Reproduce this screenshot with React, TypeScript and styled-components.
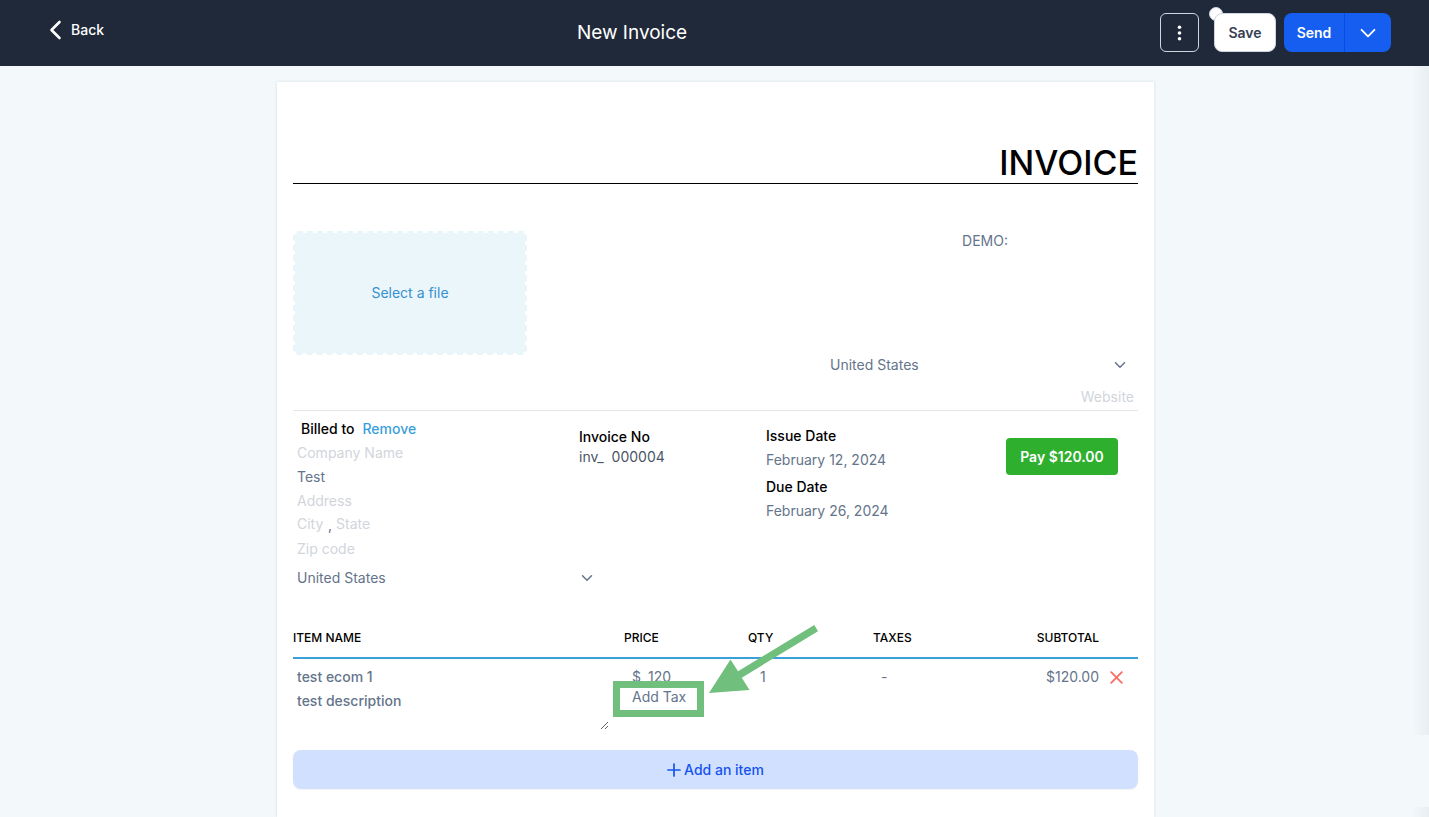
import React from "react";
import styled, { createGlobalStyle, css } from "styled-components";

const GlobalStyle = createGlobalStyle`
  *, *::before, *::after { box-sizing: border-box; }
  body {
    margin: 0;
    background: #f3f8fb;
    color: #64748b;
    font-family: Inter, "Liberation Sans", sans-serif;
    font-size: 14px;
    line-height: 20px;
  }
  button, input, select, textarea { font: inherit; color: inherit; }
  button { cursor: pointer; }
`;

const Page = styled.div`
  min-height: 100vh;
  display: flex;
  flex-direction: column;
`;

const Header = styled.header`
  display: flex;
  justify-content: space-between;
  align-items: center;
  height: 66px;
  padding: 0 38px 1px 49px;
  background: #202939;
  color: #fff;
`;

const BackLink = styled.a`
  display: flex;
  align-items: center;
  gap: 9px;
  padding-bottom: 5px;
  color: #fff;
  font-weight: 500;
  text-decoration: none;
`;

const PageTitle = styled.h1`
  margin: 0;
  font-size: 19px;
  line-height: 28px;
  font-weight: 400;
`;

const Actions = styled.div`
  display: flex;
  align-items: center;
`;

const actionButton = css`
  display: flex;
  align-items: center;
  justify-content: center;
  height: 39px;
  padding: 0;
  font-weight: 600;
`;

const MenuButton = styled.button`
  ${actionButton}
  width: 39px;
  margin-right: 15px;
  border: 1px solid #cdd5df;
  border-radius: 6px;
  background: transparent;
  color: #fff;
`;

const SaveWrap = styled.div`
  position: relative;
  margin-right: 8px;
`;

const StatusDot = styled.span`
  position: absolute;
  left: -5px;
  top: -6px;
  width: 14px;
  height: 14px;
  border: 1px solid #cdd5df;
  border-radius: 50%;
  background: #fff;
`;

const SaveButton = styled.button`
  ${actionButton}
  position: relative;
  width: 62px;
  border: 1px solid #cdd5df;
  border-radius: 8px;
  background: #fff;
  color: #364152;
`;

const SplitButton = styled.div`
  display: flex;
  border-radius: 8px;
  overflow: hidden;
  background: #155eef;
`;

const SplitPart = styled.button<{ $width: number; $divided?: boolean }>`
  ${actionButton}
  width: ${(p) => p.$width}px;
  border: 0;
  border-left: ${(p) => (p.$divided ? "1px solid #004eeb" : "0")};
  background: transparent;
  color: #fff;
`;

const Main = styled.main`
  flex: 1;
  display: flex;
  justify-content: center;
  padding: 16px 16px 0 18px;
`;

const Sheet = styled.form`
  flex: 0 1 877px;
  min-width: 0;
  padding: 61px 16px 28px;
  background: #fff;
  box-shadow: 0 0 3px rgba(16, 24, 40, 0.12);
`;

const SheetTitle = styled.h2`
  margin: 0 0 47px;
  border-bottom: 1px solid #000;
  color: #000;
  font-size: 34px;
  line-height: 40px;
  font-weight: 500;
  text-align: right;
`;

const Business = styled.section`
  display: flex;
  justify-content: space-between;
  min-height: 180px;
  border-bottom: 1px solid #e5e7eb;
`;

const UploadButton = styled.button`
  width: 234px;
  height: 124px;
  border: 2px dashed #e8f6fa;
  border-radius: 4px;
  background: #ebf6fb;
  background-clip: padding-box;
  color: #3690cf;
`;

const BusinessFields = styled.div`
  display: flex;
  flex-direction: column;
  width: 312px;
`;

const Field = styled.input<{ $strong?: boolean; $align?: string; $width?: string }>`
  display: block;
  width: ${(p) => p.$width || "100%"};
  height: 24px;
  padding: 0 4px 2px;
  border: 0;
  background: transparent;
  font-weight: ${(p) => (p.$strong ? 500 : 400)};
  text-align: ${(p) => p.$align || "left"};
  outline: none;
  &::placeholder { color: #d1d5db; opacity: 1; }
`;

const CompactField = styled(Field)`
  height: 20px;
  padding: 0 4px;
`;

const NameField = styled(CompactField)`
  margin-bottom: auto;
  padding-left: 10px;
`;

const SelectWrap = styled.div`
  display: grid;
  align-items: center;
  width: 312px;
  height: 34px;
  svg {
    grid-area: 1 / 1;
    justify-self: end;
    margin-right: 11px;
    pointer-events: none;
  }
`;

const Select = styled.select`
  grid-area: 1 / 1;
  width: 100%;
  height: 100%;
  padding: 0 4px;
  border: 0;
  background: transparent;
  appearance: none;
  outline: none;
`;

const WebsiteField = styled(Field)`
  margin: 3px 0 1px;
`;

const Details = styled.section`
  display: grid;
  grid-template-columns: 286fr 187fr 240fr 132fr;
  padding-top: 6px;
`;

const BilledHead = styled.div`
  display: flex;
  gap: 8px;
  padding-left: 8px;
  line-height: 24px;
`;

const Label = styled.span`
  color: #000;
  font-weight: 500;
`;

const RemoveButton = styled.button`
  padding: 0;
  border: 0;
  background: none;
  color: #3a9fdb;
  font-weight: 500;
`;

const CityRow = styled.div`
  display: flex;
  line-height: 24px;
`;

const InvoiceNo = styled.div`
  display: flex;
  flex-direction: column;
  padding-top: 10px;
`;

const NumberRow = styled.div`
  display: flex;
  gap: 4px;
  color: #4b5565;
`;

const Dates = styled.dl`
  margin: 0;
  padding-top: 7px;
  line-height: 24px;
  dt { color: #000; font-weight: 500; }
  dd { margin: 0 0 3px; }
`;

const PayButton = styled.button`
  width: 112px;
  height: 37px;
  margin-top: 21px;
  padding: 0;
  border: 0;
  border-radius: 4px;
  background: #2eaf2e;
  color: #fff;
  font-weight: 600;
`;

const ItemsTable = styled.table`
  width: 100%;
  margin-top: 23px;
  border-collapse: collapse;
  table-layout: fixed;
`;

const HeadCell = styled.th<{ $width?: string; $right?: boolean }>`
  width: ${(p) => p.$width || "auto"};
  height: 40px;
  padding: 1px 0 0;
  border-bottom: 2px solid #3a9fdb;
  color: #000;
  font-size: 12px;
  line-height: 16px;
  font-weight: 500;
  text-align: ${(p) => (p.$right ? "right" : "left")};
`;

const Cell = styled.td<{ $indent?: number; $right?: boolean }>`
  position: relative;
  padding: 8px 0 0 ${(p) => p.$indent || 0}px;
  vertical-align: top;
  text-align: ${(p) => (p.$right ? "right" : "left")};
`;

const Description = styled.textarea`
  display: block;
  width: calc(100% - 15px);
  height: 41px;
  padding: 2px 4px;
  border: 0;
  background: transparent;
  font-weight: 500;
  resize: both;
  outline: none;
`;

const ItemName = styled(CompactField)`
  margin-bottom: 2px;
`;

const PriceRow = styled.div`
  display: flex;
  gap: 3px;
`;

const TextButton = styled.button`
  display: block;
  padding: 0;
  border: 0;
  background: none;
`;

const DeleteButton = styled(TextButton)`
  display: flex;
  align-items: center;
  height: 20px;
`;

const Callout = styled.svg`
  position: absolute;
  left: -11px;
  top: -35px;
  z-index: 1;
  pointer-events: none;
`;

const AddItemButton = styled.button`
  display: flex;
  align-items: center;
  justify-content: center;
  gap: 3px;
  width: 100%;
  height: 39px;
  margin-top: 20px;
  border: 0;
  border-radius: 8px;
  background: #d1e0ff;
  box-shadow: 0 1px 2px rgba(16, 24, 40, 0.05);
  color: #1453ee;
  font-weight: 500;
`;

const EdgeShade = styled.div<{ $top: string; $bottom: string }>`
  position: fixed;
  right: 0;
  top: ${(p) => p.$top};
  bottom: ${(p) => p.$bottom};
  width: 16px;
  background: linear-gradient(to right, rgba(230, 237, 239, 0), rgba(230, 237, 239, 0.9));
  pointer-events: none;
`;

function Chevron({ size, stroke }: { size: number; stroke: number }) {
  return (
    <svg width={size} height={size} viewBox="0 0 14 14" fill="none" stroke="currentColor"
      strokeWidth={stroke} strokeLinecap="round" strokeLinejoin="round" aria-hidden="true">
      <path d="M2.5 4.8 7 9.3l4.5-4.5" />
    </svg>
  );
}

function CountrySelect({ label }: { label: string }) {
  return (
    <SelectWrap>
      <Select aria-label={label} defaultValue="US">
        <option value="US">United States</option>
        <option value="CA">Canada</option>
      </Select>
      <Chevron size={14} stroke={1.5} />
    </SelectWrap>
  );
}

export default function App() {
  return (
    <Page>
      <GlobalStyle />
      <Header>
        <BackLink href="#">
          <svg width="13" height="20" viewBox="0 0 13 20" fill="none" stroke="currentColor"
            strokeWidth="2.6" strokeLinecap="round" strokeLinejoin="round" aria-hidden="true">
            <path d="M10.5 2 2.5 10l8 8" />
          </svg>
          Back
        </BackLink>
        <PageTitle>New Invoice</PageTitle>
        <Actions>
          <MenuButton type="button" aria-label="More options">
            <svg width="5" height="16" viewBox="0 0 5 16" fill="currentColor" aria-hidden="true">
              <circle cx="2.5" cy="2.3" r="1.8" />
              <circle cx="2.5" cy="8" r="1.8" />
              <circle cx="2.5" cy="13.7" r="1.8" />
            </svg>
          </MenuButton>
          <SaveWrap>
            <StatusDot />
            <SaveButton type="button">Save</SaveButton>
          </SaveWrap>
          <SplitButton>
            <SplitPart type="button" $width={60}>Send</SplitPart>
            <SplitPart type="button" $width={47} $divided aria-label="Send options">
              <Chevron size={20} stroke={1.3} />
            </SplitPart>
          </SplitButton>
        </Actions>
      </Header>
      <Main>
        <Sheet onSubmit={(e) => e.preventDefault()}>
          <SheetTitle>INVOICE</SheetTitle>
          <Business>
            <UploadButton type="button">Select a file</UploadButton>
            <BusinessFields>
              <NameField aria-label="Business name" defaultValue="DEMO:" $align="center" />
              <CountrySelect label="Business country" />
              <WebsiteField aria-label="Website" placeholder="Website" $align="right" />
            </BusinessFields>
          </Business>
          <Details>
            <div>
              <BilledHead>
                <Label>Billed to</Label>
                <RemoveButton type="button">Remove</RemoveButton>
              </BilledHead>
              <Field aria-label="Company name" placeholder="Company Name" />
              <Field aria-label="Customer name" defaultValue="Test" />
              <Field aria-label="Address" placeholder="Address" />
              <CityRow>
                <Field aria-label="City" placeholder="City" $width="35px" />
                ,
                <Field aria-label="State" placeholder="State" $width="80px" />
              </CityRow>
              <Field aria-label="Zip code" placeholder="Zip code" />
            </div>
            <InvoiceNo>
              <Label as="label" htmlFor="invoice-number">Invoice No</Label>
              <NumberRow>
                inv_
                <CompactField id="invoice-number" defaultValue="000004" $width="100px" />
              </NumberRow>
            </InvoiceNo>
            <Dates>
              <dt>Issue Date</dt>
              <dd>February 12, 2024</dd>
              <dt>Due Date</dt>
              <dd>February 26, 2024</dd>
            </Dates>
            <div>
              <PayButton type="button">Pay $120.00</PayButton>
            </div>
          </Details>
          <CountrySelect label="Customer country" />
          <ItemsTable>
            <thead>
              <tr>
                <HeadCell>ITEM NAME</HeadCell>
                <HeadCell $width="124px">PRICE</HeadCell>
                <HeadCell $width="125px">QTY</HeadCell>
                <HeadCell $width="125px">TAXES</HeadCell>
                <HeadCell $width="101px" $right>SUBTOTAL</HeadCell>
                <HeadCell $width="39px" aria-label="Remove item" />
              </tr>
            </thead>
            <tbody>
              <tr>
                <Cell>
                  <ItemName aria-label="Item name" defaultValue="test ecom 1" $strong />
                  <Description aria-label="Item description" defaultValue="test description" />
                </Cell>
                <Cell $indent={8}>
                  <PriceRow>
                    $
                    <CompactField aria-label="Price" defaultValue="120" $width="60px" />
                  </PriceRow>
                  <TextButton type="button">Add Tax</TextButton>
                  <Callout width="210" height="96" viewBox="0 0 210 96" aria-hidden="true">
                    <rect x="3.5" y="60.5" width="84" height="29" fill="none" stroke="#70bf7d" strokeWidth="7" />
                    <path d="M96 69 117.5 35.5 125 47.3 201.3 1 205 7.2 128.8 53.7 136.5 66Z" fill="#70bf7d" />
                  </Callout>
                </Cell>
                <Cell $indent={8}>
                  <CompactField aria-label="Quantity" defaultValue="1" $width="60px" />
                </Cell>
                <Cell $indent={8}>-</Cell>
                <Cell $right>$120.00</Cell>
                <Cell $indent={11}>
                  <DeleteButton type="button" aria-label="Delete item">
                    <svg width="13" height="13" viewBox="0 0 13 13" fill="none" stroke="#f97066"
                      strokeWidth="1.9" strokeLinecap="round" aria-hidden="true">
                      <path d="M1.2 1.2 11.8 11.8M11.8 1.2 1.2 11.8" />
                    </svg>
                  </DeleteButton>
                </Cell>
              </tr>
            </tbody>
          </ItemsTable>
          <AddItemButton type="button">
            <svg width="14" height="14" viewBox="0 0 14 14" fill="none" stroke="currentColor"
              strokeWidth="1.7" strokeLinecap="round" aria-hidden="true">
              <path d="M7 1v12M1 7h12" />
            </svg>
            Add an item
          </AddItemButton>
        </Sheet>
      </Main>
      <EdgeShade $top="66px" $bottom="82px" />
      <EdgeShade $top="calc(100vh - 10px)" $bottom="0" />
    </Page>
  );
}
